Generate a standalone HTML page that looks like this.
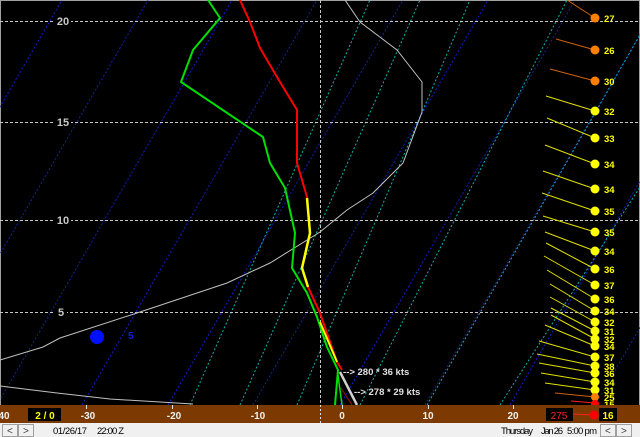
<!DOCTYPE html>
<html><head><meta charset="utf-8"><style>
html,body{margin:0;padding:0;background:#000;width:640px;height:437px;overflow:hidden;font-family:"Liberation Sans",sans-serif}
#wrap{position:relative;width:640px;height:437px}
svg{position:absolute;left:0;top:0}
</style></head><body><div id="wrap">
<svg width="640" height="437" viewBox="0 0 640 437" font-family="Liberation Sans, sans-serif">
<rect x="0" y="0" width="640" height="405" fill="#000"/>
<rect x="0" y="0" width="640" height="1" fill="#a0a0a0"/>
<rect x="0" y="0" width="1" height="405" fill="#a0a0a0"/>
<rect x="639" y="0" width="1" height="405" fill="#a0a0a0"/>
<g stroke="#1020c0" stroke-width="1" stroke-dasharray="2,2">
<line x1="-173" y1="405" x2="62" y2="0"/>
<line x1="-88" y1="405" x2="148" y2="0"/>
<line x1="-3" y1="405" x2="232" y2="0"/>
<line x1="82" y1="405" x2="317" y2="0"/>
<line x1="168" y1="405" x2="403" y2="0"/>
<line x1="253" y1="405" x2="488" y2="0"/>
<line x1="340" y1="405" x2="575" y2="0"/>
<line x1="425" y1="405" x2="660" y2="0"/>
<line x1="510" y1="405" x2="745" y2="0"/>
<line x1="595" y1="405" x2="830" y2="0"/>
</g>
<g stroke="#10b0b0" stroke-width="1" stroke-dasharray="2,2">
<line x1="190" y1="405" x2="370" y2="0"/>
<line x1="240" y1="405" x2="420" y2="0"/>
<line x1="297" y1="405" x2="470" y2="0"/>
<line x1="360" y1="405" x2="567" y2="0"/>
<line x1="427" y1="405" x2="660" y2="0"/>
<line x1="500" y1="405" x2="760" y2="0"/>
</g>
<g stroke="#c8c8c8" stroke-width="1" stroke-dasharray="3,2">
<line x1="0" y1="21.5" x2="640" y2="21.5"/>
<line x1="0" y1="122.5" x2="640" y2="122.5"/>
<line x1="0" y1="220.5" x2="640" y2="220.5"/>
<line x1="0" y1="312.5" x2="640" y2="312.5"/>
<line x1="320.5" y1="0" x2="320.5" y2="405"/>
</g>
<g fill="#c8c8c8" font-size="11" font-weight="bold" text-anchor="middle">
<rect x="55" y="15" width="16" height="12" fill="#000"/><text x="63" y="25">20</text>
<rect x="55" y="116" width="16" height="12" fill="#000"/><text x="63" y="126">15</text>
<rect x="55" y="214" width="16" height="12" fill="#000"/><text x="63" y="224">10</text>
<rect x="55" y="306" width="12" height="12" fill="#000"/><text x="61" y="316">5</text>
</g>
<g fill="none" stroke="#c0c0c0" stroke-width="1">
<polyline points="345,0 360,22 397,50 422,82 422,112 403,163 373,193 347,210 320,232 270,263 227,283 200,292 140,312 60,338 43,347 0,360"/>
<polyline points="0,386 57,393 110,399 193,404"/>
</g>
<line x1="340" y1="372" x2="357" y2="405" stroke="#d0d0d0" stroke-width="2.5"/>
<line x1="341" y1="388" x2="352" y2="405" stroke="#a01010" stroke-width="1"/>
<polyline fill="none" stroke="#00e000" stroke-width="2" points="208,0 220,18 193,50 181,82 263,137 270,163 285,188 295,233 292,268 307,293 317,317 327,347 338,370 335,405"/>
<polyline fill="none" stroke="#00e000" stroke-width="1.5" points="338,375 342,405"/>
<polyline fill="none" stroke="#ff0000" stroke-width="2" points="240,0 250,22 260,48 277,77 297,110 297,163 307,197 310,233 302,268 308,287 320,313 337,362 342,370"/>
<polyline fill="none" stroke="#ffff00" stroke-width="2.5" points="307,198 310,233 302,268 308,287"/>
<polyline fill="none" stroke="#ffff00" stroke-width="2" points="320,322 337,362"/>
<circle cx="97" cy="337" r="7" fill="#0010ff"/>
<text x="128" y="339" fill="#1020e0" font-size="10" font-weight="bold">5</text>
<g fill="#e0e0e0" font-size="9.5" font-weight="bold">
<text x="343" y="375">--&gt;  280 * 36 kts</text>
<text x="354" y="395">--&gt;  278 * 29 kts</text>
</g>
<g stroke-width="1">
<g stroke="#d06010">
<line x1="567" y1="0" x2="595" y2="18"/><line x1="556" y1="39" x2="595" y2="50"/><line x1="550" y1="69" x2="595" y2="81"/>
<line x1="555" y1="393" x2="595" y2="397"/>
</g>
<g stroke="#e0e000">
<line x1="546" y1="96" x2="595" y2="111"/><line x1="547" y1="118" x2="595" y2="138"/><line x1="545" y1="145" x2="595" y2="164"/>
<line x1="543" y1="171" x2="595" y2="189"/><line x1="542" y1="193" x2="595" y2="211"/><line x1="543" y1="216" x2="595" y2="232"/>
<line x1="545" y1="232" x2="595" y2="251"/><line x1="546" y1="243" x2="595" y2="269"/><line x1="544" y1="256" x2="595" y2="285"/>
<line x1="547" y1="270" x2="595" y2="299"/><line x1="550" y1="284" x2="595" y2="311"/><line x1="550" y1="297" x2="595" y2="322"/>
<line x1="551" y1="308" x2="595" y2="331"/><line x1="551" y1="315" x2="595" y2="339"/><line x1="545" y1="325" x2="595" y2="346"/>
<line x1="539" y1="341" x2="595" y2="357"/><line x1="537" y1="354" x2="595" y2="366"/><line x1="539" y1="363" x2="595" y2="373"/>
<line x1="541" y1="373" x2="595" y2="382"/><line x1="545" y1="383" x2="595" y2="390"/>
</g>
<line x1="571" y1="401" x2="595" y2="403" stroke="#ff2020"/>
</g>
<g fill="#ff8000"><circle cx="595" cy="18" r="4.5"/><circle cx="595" cy="50" r="4.5"/><circle cx="595" cy="81" r="4.5"/></g>
<g fill="#ffff00">
<circle cx="595" cy="111" r="4.5"/><circle cx="595" cy="138" r="4.5"/><circle cx="595" cy="164" r="4.5"/><circle cx="595" cy="189" r="4.5"/>
<circle cx="595" cy="211" r="4.5"/><circle cx="595" cy="232" r="4.5"/><circle cx="595" cy="251" r="4.5"/><circle cx="595" cy="269" r="4.5"/>
<circle cx="595" cy="285" r="4.5"/><circle cx="595" cy="299" r="4.5"/><circle cx="595" cy="311" r="4.5"/><circle cx="595" cy="322" r="4.5"/>
<circle cx="595" cy="331" r="4.5"/><circle cx="595" cy="339" r="4.5"/><circle cx="595" cy="346" r="4.5"/><circle cx="595" cy="357" r="4.5"/>
<circle cx="595" cy="366" r="4.5"/><circle cx="595" cy="373" r="4.5"/><circle cx="595" cy="382" r="4.5"/><circle cx="595" cy="390" r="4.5"/>
</g>
<circle cx="595" cy="397" r="4" fill="#ff8000"/>
<circle cx="595" cy="404" r="4" fill="#ff0000"/>
<g fill="#ffff00" font-size="9.5" font-weight="bold">
<text x="604" y="22">27</text><text x="604" y="54">26</text><text x="604" y="85">30</text><text x="604" y="115">32</text>
<text x="604" y="142">33</text><text x="604" y="168">34</text><text x="604" y="193">34</text><text x="604" y="215">35</text>
<text x="604" y="236">35</text><text x="604" y="255">34</text><text x="604" y="273">36</text><text x="604" y="289">37</text>
<text x="604" y="303">36</text><text x="604" y="315">34</text><text x="604" y="326">32</text><text x="604" y="335">31</text>
<text x="604" y="343">32</text><text x="604" y="350">34</text><text x="604" y="361">37</text><text x="604" y="370">38</text>
<text x="604" y="377">36</text><text x="604" y="386">34</text><text x="604" y="394">31</text><text x="604" y="401">25</text>
<text x="604" y="408">15</text>
</g>
<rect x="0" y="405" width="640" height="18" fill="#7c3a02"/>
<g stroke="#e0e0e0" stroke-width="1"><line x1="86.5" y1="405" x2="86.5" y2="409"/><line x1="172.5" y1="405" x2="172.5" y2="409"/><line x1="257.5" y1="405" x2="257.5" y2="409"/><line x1="342.5" y1="405" x2="342.5" y2="409"/><line x1="428.5" y1="405" x2="428.5" y2="409"/><line x1="513.5" y1="405" x2="513.5" y2="409"/></g>
<line x1="320.5" y1="405" x2="320.5" y2="423" stroke="#e0e0e0" stroke-dasharray="2,2"/>
<g fill="#f0f0f0" font-size="10" font-weight="bold" text-anchor="middle">
<text x="4" y="419">40</text><text x="88" y="419">-30</text><text x="174" y="419">-20</text><text x="258" y="419">-10</text>
<text x="342" y="419">0</text><text x="428" y="419">10</text><text x="513" y="419">20</text>
</g>
<rect x="28" y="408" width="33" height="13" fill="#000"/>
<text x="45" y="419" fill="#ffff00" font-size="10" font-weight="bold" text-anchor="middle">2 / 0</text>
<rect x="546" y="408" width="27" height="13" fill="#000"/>
<text x="559" y="419" fill="#ff2020" font-size="10" text-anchor="middle">275</text>
<line x1="573" y1="414" x2="593" y2="415" stroke="#ff2020"/>
<circle cx="594" cy="415" r="4.5" fill="#ff0000"/>
<rect x="599" y="408" width="18" height="13" fill="#000"/>
<text x="608" y="419" fill="#ffff00" font-size="10" font-weight="bold" text-anchor="middle">16</text>
<rect x="0" y="423" width="640" height="14" fill="#f0f0f0"/>
<g fill="#f0f0f0" stroke="#a0a0a0"><rect x="2.5" y="424.5" width="15" height="12"/><rect x="18.5" y="424.5" width="15" height="12"/><rect x="600.5" y="424.5" width="15" height="12"/><rect x="616.5" y="424.5" width="15" height="12"/></g>
<g fill="#404040" font-size="10"><text x="7" y="434">&lt;</text><text x="23" y="434">&gt;</text><text x="605" y="434">&lt;</text><text x="621" y="434">&gt;</text></g>
<g fill="#000" font-size="9.5">
<text x="53" y="434" textLength="34">01/26/17</text><text x="97" y="434" textLength="27">22:00 Z</text>
<text x="501" y="434" textLength="32">Thursday</text><text x="541" y="434" textLength="22">Jan 26</text><text x="567" y="434" textLength="30">5:00 pm</text>
</g>
</svg>
</div></body></html>
